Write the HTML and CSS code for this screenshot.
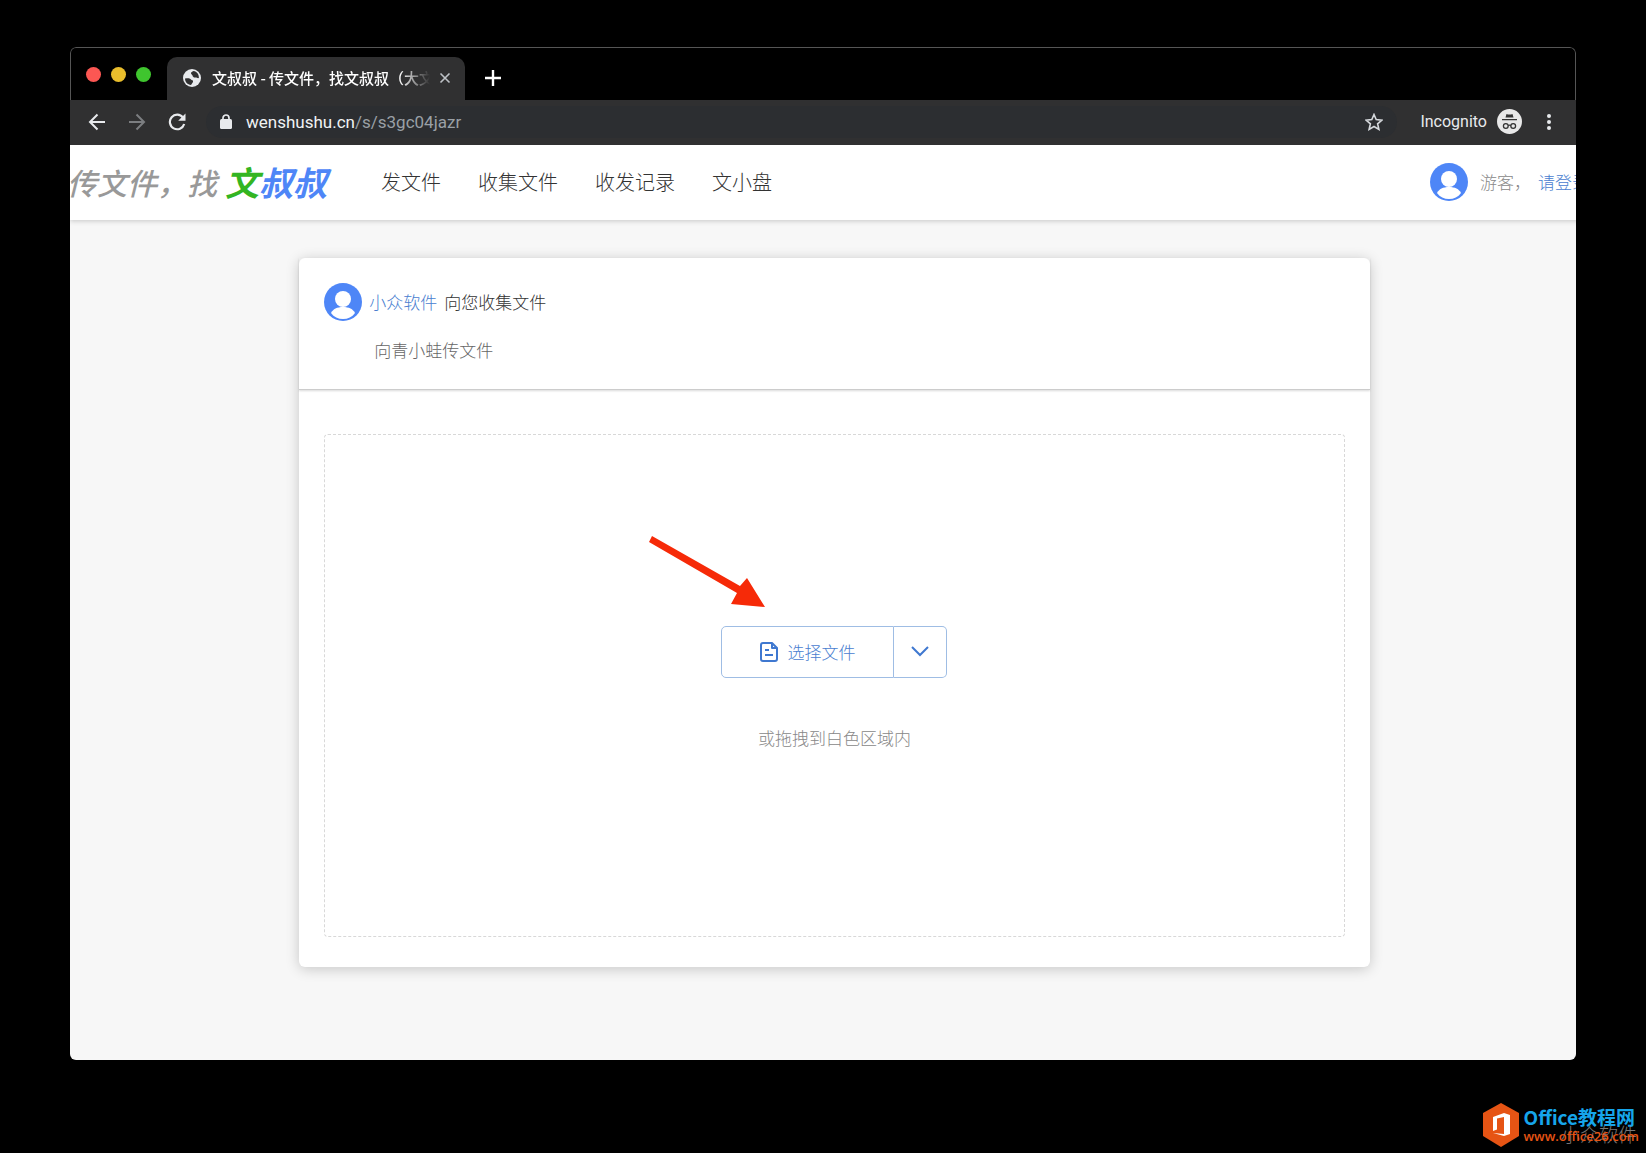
FILE: index.html
```html
<!DOCTYPE html>
<html lang="zh-CN">
<head>
<meta charset="utf-8">
<meta name="viewport" content="width=device-width, initial-scale=1">
<title>文叔叔 - 传文件，找文叔叔</title>
<link rel="stylesheet" href="styles.css">
</head>
<body>
<svg width="0" height="0" class="defs" aria-hidden="true">
  <symbol id="avatar" viewBox="0 0 38 38">
    <circle cx="19" cy="19" r="19" fill="#4e86f7"/>
    <circle cx="19" cy="16" r="8" fill="#fff"/>
    <path d="M7 30C9 26 13 24 19 24s10 2 12 6c-3 4-7 6-12 6s-9-2-12-6z" fill="#fff"/>
  </symbol>
</svg>
<div class="window">
  <div class="tabstrip">
    <div class="lights">
      <button class="light close" aria-label="Close window"></button>
      <button class="light minimise" aria-label="Minimise window"></button>
      <button class="light expand" aria-label="Expand window"></button>
    </div>
    <div class="tab">
      <svg class="favicon" viewBox="0 0 18 18" aria-hidden="true">
        <circle cx="9" cy="9" r="9" fill="#e8eaed"/>
        <path d="M2 9.500c2 0 3-.5 4.500 0s2 2 3.500 2v1.500l-2 3C4.500 15.500 2 13 2 9.500zM10.500 2C9 3 8 3 8 4.500c0 1 1.500 1 1.500 2S11 9 12.500 8.500c1.500 0 2 1 3.400.5C16 5 14 2.600 10.500 2z" fill="#303031"/>
      </svg>
      <span class="tab-title">文叔叔 - 传文件，找文叔叔（大文件</span>
      <button class="icon-button tab-close" aria-label="Close tab">
        <svg width="12" height="12" viewBox="0 0 12 12" stroke="#bdc1c6" stroke-width="1.6"><path d="M1.500 1.500l9 9M10.500 1.500l-9 9"/></svg>
      </button>
    </div>
    <button class="icon-button new-tab" aria-label="New tab">
      <svg width="16" height="16" viewBox="0 0 16 16" stroke="#fff" stroke-width="2.400"><path d="M8 0v16M0 8h16"/></svg>
    </button>
  </div>
  <div class="toolbar">
    <div class="history">
      <button class="icon-button" aria-label="Back">
        <svg width="18" height="18" viewBox="0 0 18 18" fill="none" stroke="#e8eaed" stroke-width="2"><path d="M17 9H2M9.500 1.500L2 9l7.500 7.500"/></svg>
      </button>
      <button class="icon-button" aria-label="Forward">
        <svg width="18" height="18" viewBox="0 0 18 18" fill="none" stroke="#7c7e81" stroke-width="2"><path d="M1 9h15M8.500 1.500L16 9l-7.500 7.500"/></svg>
      </button>
      <button class="icon-button" aria-label="Reload">
        <svg width="18" height="18" viewBox="0 0 18 18" fill="none"><path d="M15 4.500A7.300 7.300 0 1 0 16.200 11" stroke="#e8eaed" stroke-width="2.200"/><path d="M17.500 .5v7.300h-7.300z" fill="#e8eaed"/></svg>
      </button>
    </div>
    <div class="address">
      <svg width="12" height="15" viewBox="0 0 12 15" aria-hidden="true"><rect y="5" width="12" height="10" rx="1.500" fill="#e8eaed"/><path d="M3 6V4a3 3 0 0 1 6 0v2" fill="none" stroke="#e8eaed" stroke-width="1.700"/></svg>
      <a class="url" href="#"><span class="host">wenshushu.cn</span>/s/s3gc04jazr</a>
      <button class="icon-button" aria-label="Bookmark">
        <svg width="18" height="18" viewBox="0 0 18 18" fill="none" stroke="#d5d8dc" stroke-width="1.600"><path d="M9 1.500l2.200 5.100 5.700.5-4.300 3.700 1.300 5.600L9 13.500l-4.900 2.900 1.300-5.600L1.100 7.100l5.700-.5z"/></svg>
      </button>
    </div>
    <div class="mode">
      <span>Incognito</span>
      <svg width="25" height="25" viewBox="0 0 25 25" aria-hidden="true">
        <circle cx="12.500" cy="12.500" r="12.500" fill="#e8e8e8"/>
        <path d="M9.500 5q3 1 6 0l1 3.500h-8zM5 10h15v1.300H5z" fill="#333"/>
        <g fill="none" stroke="#333" stroke-width="1.300"><circle cx="8.800" cy="17" r="2.400"/><circle cx="16.200" cy="17" r="2.400"/><path d="M11.200 16.500q1.300-.8 2.600 0"/></g>
      </svg>
    </div>
    <button class="icon-button" aria-label="Menu">
      <svg width="4" height="16" viewBox="0 0 4 16" fill="#e8eaed"><circle cx="2" cy="2" r="2"/><circle cx="2" cy="8" r="2"/><circle cx="2" cy="14" r="2"/></svg>
    </button>
  </div>
  <div class="viewport">
    <div class="site">
      <header class="site-header">
        <a class="brand" href="#"><span class="slogan">传文件，找</span><span class="name"><span class="first">文</span>叔叔</span></a>
        <nav class="nav">
          <a href="#">发文件</a>
          <a href="#">收集文件</a>
          <a href="#">收发记录</a>
          <a href="#">文小盘</a>
        </nav>
        <div class="account">
          <svg class="avatar" aria-hidden="true"><use href="#avatar"/></svg>
          <span class="guest">游客，</span>
          <a href="#">请登录</a>
        </div>
      </header>
      <main class="card">
        <section class="request">
          <div class="requester">
            <svg class="avatar" aria-hidden="true"><use href="#avatar"/></svg>
            <a href="#">小众软件</a>
            <span>向您收集文件</span>
          </div>
          <p class="note">向青小蛙传文件</p>
        </section>
        <section class="upload">
          <div class="dropzone">
            <div class="picker">
              <button class="choose">
                <svg width="18" height="20" viewBox="0 0 18 20" fill="none" stroke="#3f78d0" stroke-width="2" stroke-linejoin="round" aria-hidden="true"><path d="M3 1h9l5 5v11a2 2 0 0 1-2 2H3a2 2 0 0 1-2-2V3a2 2 0 0 1 2-2z"/><path d="M12 1v5h5M5 8h4M5 13h8"/></svg>
                选择文件
              </button>
              <button class="more" aria-label="更多">
                <svg width="18" height="11" viewBox="0 0 18 11" fill="none" stroke="#3f78d0" stroke-width="2"><path d="M1 1l8 8 8-8"/></svg>
              </button>
              <svg class="pointer" width="116" height="72" viewBox="0 0 116 72" aria-hidden="true"><path d="M0 6L3 0 91 50 98 42 116 71 82 68 88 57z" fill="#f62a08"/></svg>
            </div>
            <p class="hint">或拖拽到白色区域内</p>
          </div>
        </section>
      </main>
    </div>
  </div>
</div>
<aside class="watermark">
  <svg width="36" height="44" viewBox="0 0 36 44" aria-hidden="true">
    <path d="M18 0l18 10v23L18 44 0 33V10z" fill="#e65414"/>
    <path d="M10 14l11-4 6 2v19l-6 2-11-3 11 1V14l-7 1.500v11L10 28z" fill="#fff"/>
  </svg>
  <div class="watermark-text">
    <span class="watermark-name">Office教程网</span>
    <span class="watermark-url">www.office26.com</span>
    <span class="watermark-source">小众软件</span>
  </div>
</aside>
</body>
</html>
```

FILE: styles.css
```css
* { box-sizing: border-box; }

body {
  position: relative;
  display: flex;
  flex-direction: column;
  min-height: 100vh;
  margin: 0;
  padding: 47px 70px 93px;
  background: #000;
  font-family: "Noto Sans CJK SC", sans-serif;
  font-weight: 300;
  font-size: 17px;
  line-height: 24px;
}

p { margin: 0; }
a { color: #4a80d0; text-decoration: none; }
button { font: inherit; cursor: pointer; }
.defs { position: absolute; }

.icon-button {
  display: flex;
  padding: 0;
  border: 0;
  background: none;
}

/* Browser window */
.window {
  flex: 1;
  display: flex;
  flex-direction: column;
  border-radius: 6px;
  overflow: hidden;
}

.tabstrip {
  display: flex;
  align-items: flex-end;
  height: 53px;
  border: 1px solid #555;
  border-bottom: 0;
  border-radius: 6px 6px 0 0;
}

.lights {
  display: flex;
  gap: 10px;
  padding: 0 16px 18px 15px;
}

.light {
  width: 15px;
  height: 15px;
  padding: 0;
  border: 0;
  border-radius: 50%;
}
.close { background: #fc5753; }
.minimise { background: #e9bd2c; }
.expand { background: #3fc52e; }

.tab {
  display: flex;
  align-items: center;
  width: 298px;
  height: 43px;
  padding: 0 14px 2px 16px;
  border-radius: 10px 10px 0 0;
  background: #303031;
}

.favicon { flex: none; width: 18px; height: 18px; }

.tab-title {
  flex: 1;
  margin: 0 9px 0 11px;
  overflow: hidden;
  color: #fff;
  font-size: 15px;
  font-weight: 500;
  white-space: nowrap;
  -webkit-mask-image: linear-gradient(to right, #000 86%, transparent);
  mask-image: linear-gradient(to right, #000 86%, transparent);
}

.new-tab { margin: 0 0 14px 20px; }

.toolbar {
  display: flex;
  align-items: center;
  height: 45px;
  padding: 0 25px 2px 18px;
  background: #303031;
  color: #e8eaed;
  font-family: Roboto, sans-serif;
  font-weight: 400;
}

.history { display: flex; gap: 22px; }

.address {
  flex: 1;
  display: flex;
  align-items: center;
  gap: 14px;
  height: 32px;
  margin-left: 20px;
  padding: 0 14px;
  border-radius: 16px;
  background: #2c2e31;
}

.url { flex: 1; color: #9aa0a6; }
.host { color: #f1f3f4; }

.mode {
  display: flex;
  align-items: center;
  gap: 10px;
  margin: 0 25px 0 23px;
  font-size: 16px;
}

/* Page inside the window */
.viewport {
  flex: 1;
  display: flex;
  overflow: hidden;
  background: #f7f7f7;
}

.site {
  flex: none;
  display: flex;
  flex-direction: column;
  width: calc(100% + 23px);
}

.site-header {
  display: flex;
  align-items: center;
  height: 75px;
  padding: 0 10px 2px 0;
  background: #fff;
  box-shadow: 0 1px 5px rgba(0, 0, 0, .2);
}

.brand {
  display: flex;
  align-items: center;
  gap: 8px;
  margin-left: -3px;
  font-style: italic;
  font-weight: 700;
}
.slogan { color: #999; font-size: 30px; font-weight: 500; }
.name { color: #4e86f7; font-size: 34px; }
.first { color: #33b522; }

.nav {
  display: flex;
  gap: 37px;
  margin-left: 54px;
  font-size: 20px;
}
.nav a { color: #333; }

.account {
  display: flex;
  align-items: center;
  margin-left: auto;
}
.guest { margin: 0 7px 0 12px; color: #888; }
.avatar { flex: none; width: 38px; height: 38px; }

.card {
  flex: 1;
  display: flex;
  flex-direction: column;
  width: 70%;
  margin: 38px auto 93px;
  border-radius: 6px;
  background: #fff;
  box-shadow: 0 2px 14px rgba(0, 0, 0, .2);
}

.request {
  padding: 25px 25px 27px;
  border-bottom: 1px solid #ccc;
  box-shadow: 0 1px 2px rgba(0, 0, 0, .15);
}
.requester {
  display: flex;
  align-items: center;
  gap: 7px;
  color: #333;
}
.note { margin: 17px 0 0 50px; color: #666; }

.upload {
  flex: 1;
  display: flex;
  padding: 44px 25px 30px;
}

.dropzone {
  flex: 1;
  display: flex;
  flex-direction: column;
  align-items: center;
  justify-content: center;
  gap: 48px;
  padding: 86px 0 82px;
  border: 1px dashed #d8d8d8;
  border-radius: 4px;
}

.picker { position: relative; display: flex; }

.choose, .more {
  display: flex;
  align-items: center;
  justify-content: center;
  height: 52px;
  border: 1px solid #9fbde4;
  background: #fff;
  color: #4a80d0;
}
.choose {
  gap: 9px;
  padding: 0 38px;
  border-radius: 5px 0 0 5px;
}
.more {
  width: 53px;
  border-left: 0;
  border-radius: 0 5px 5px 0;
}

.pointer {
  position: absolute;
  left: -72px;
  top: -90px;
}

.hint { color: #888; }

/* Corner watermark */
.watermark {
  position: absolute;
  right: 7px;
  bottom: 6px;
  display: flex;
  align-items: center;
  gap: 5px;
}
.watermark-text {
  position: relative;
  display: flex;
  flex-direction: column;
}
.watermark-name {
  color: #16a5ea;
  font-size: 19px;
  font-weight: 700;
  line-height: 22px;
}
.watermark-url {
  z-index: 1;
  color: #e65414;
  font-family: "Open Sans", sans-serif;
  font-size: 13px;
  font-weight: 600;
  line-height: 16px;
}
.watermark-source {
  position: absolute;
  right: 2px;
  bottom: -2px;
  color: #777;
  font-size: 19px;
}
```
